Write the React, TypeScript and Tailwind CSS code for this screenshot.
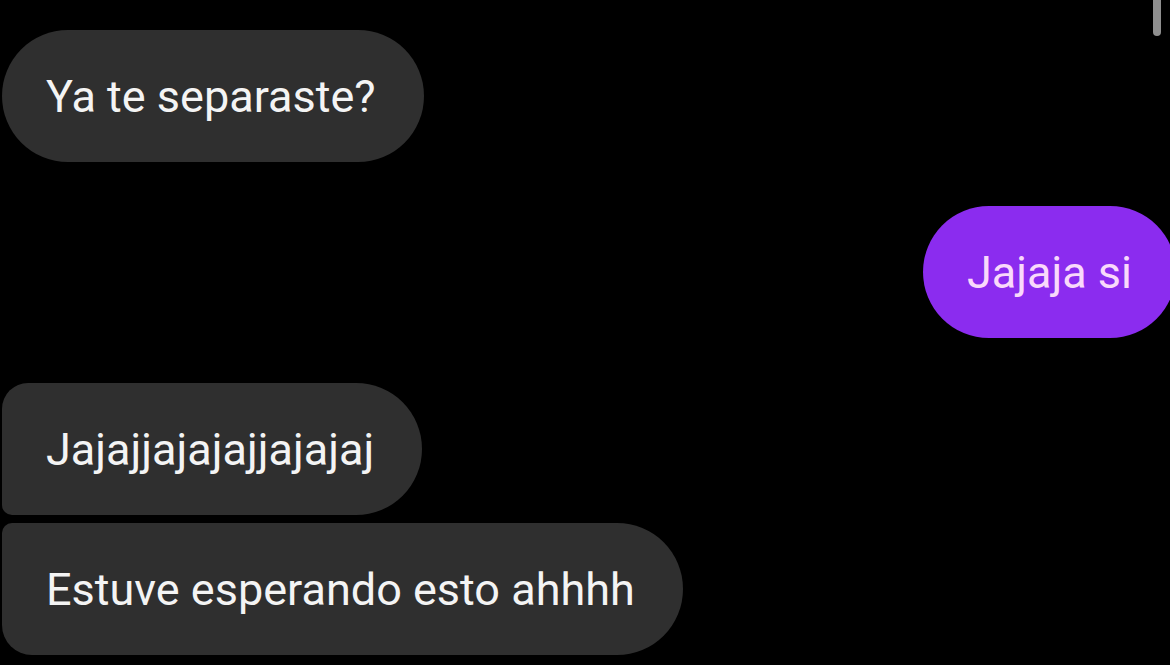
import React from "react";

type Msg = { text: string; mine?: boolean; corners: string };

const font = { fontFamily: "Roboto, 'Noto Sans', sans-serif" };

function Bubble({ text, mine, corners }: Msg) {
  return (
    <div
      className={`flex h-[132px] items-center text-[45px] leading-none whitespace-nowrap ${corners} ${
        mine
          ? "self-end -mr-[6px] pl-[44px] pr-[44px] bg-[#8b2cef] text-[#f9d9fb]"
          : "self-start ml-[2px] pl-[44px] pr-[48px] bg-[#2f2f2f] text-[#f4f4f4]"
      }`}
    >
      {text}
    </div>
  );
}

export default function App() {
  return (
    <div
      className="relative h-[665px] w-[1170px] overflow-hidden bg-black"
      style={font}
    >
      {/* scroll indicator */}
      <div className="absolute right-[9px] top-[-4px] h-[40px] w-[8px] rounded-full bg-[#8f8f8f]" />

      <div className="flex flex-col pt-[30px]">
        <Bubble text="Ya te separaste?" corners="rounded-[66px]" />
        <div className="mt-[44px] flex flex-col">
          <Bubble text="Jajaja si" mine corners="rounded-[66px]" />
        </div>
        <div className="mt-[45px] flex flex-col gap-[8px]">
          <Bubble
            text="Jajajjajajajjajajaj"
            corners="rounded-tl-[26px] rounded-bl-[10px] rounded-r-[66px]"
          />
          <Bubble
            text="Estuve esperando esto ahhhh"
            corners="rounded-tl-[10px] rounded-bl-[30px] rounded-r-[66px]"
          />
        </div>
      </div>
    </div>
  );
}
